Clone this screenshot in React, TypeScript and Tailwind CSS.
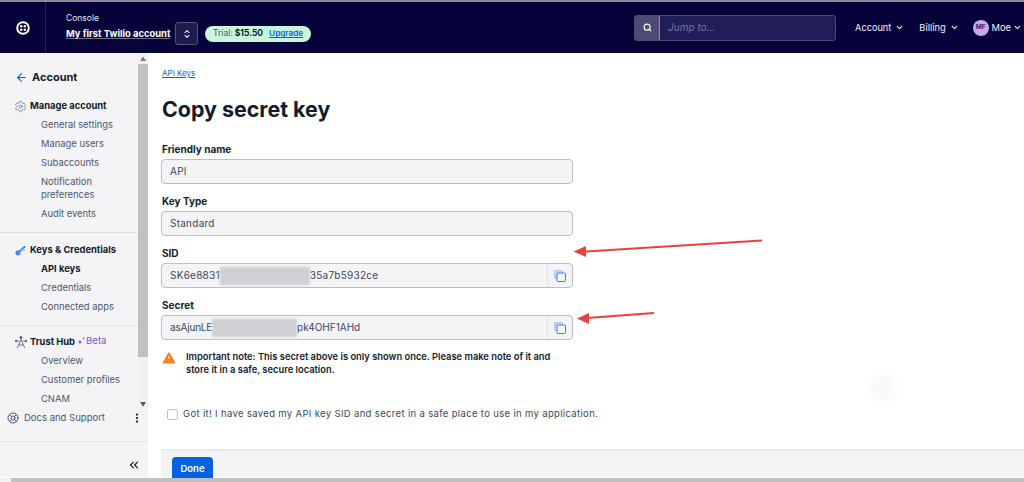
import React from "react";
import { Search, ChevronDown, ChevronsUpDown, ArrowLeft, Settings, LifeBuoy, EllipsisVertical, ChevronsLeft, TriangleAlert } from "lucide-react";

function Sub({ children, bold }: { children: React.ReactNode; bold?: boolean }) {
  return <div className={`pl-[41px] pr-2 py-[3px] text-[9.4px] leading-[13px] ${bold ? "font-bold text-[#121c2d]" : "text-[#4b5671]"}`}>{children}</div>;
}

function GroupTitle({ icon, children }: { icon: React.ReactNode; children: React.ReactNode }) {
  return (
    <div className="flex items-center gap-[3px] pl-[15px] h-[16px] text-[9.4px] font-bold text-[#121c2d] whitespace-nowrap">
      {icon}
      {children}
    </div>
  );
}

function Field({ label, value, tail, blur, tight }: { label: string; value: string; tail?: string; blur?: number; tight?: boolean }) {
  return (
    <div className="w-[412px] mb-[10px]">
      <div className="text-[10px] leading-[15px] font-bold text-[#121c2d] ml-[1px] mb-[4px] h-[13px]">{label}</div>
      <div className="flex items-center h-[25px] rounded-[4px] border border-[#b8bdd1] bg-[#f4f4f6] text-[10px] text-[#394762]">
        <span className={`pl-[8px] whitespace-nowrap ${tight ? "tracking-[-0.2px]" : "tracking-[0.25px]"}`}>{value}</span>
        {blur && <span className="h-[18px] bg-[#cfd0d4] blur-[1px]" style={{ width: blur }} />}
        {tail && <span className={`whitespace-nowrap ${tight ? "tracking-[0px]" : "tracking-[0.25px]"}`}>{tail}</span>}
        {blur && (
          <span className="ml-auto w-[25px] h-full border-l border-[#e1e3ea] flex items-center justify-center">
            <svg width="12" height="12" viewBox="0 0 12 12" fill="none">
              <rect x="0.5" y="0.5" width="8" height="8" rx="1" fill="#c3d5f7" stroke="#a9c4f3" />
              <rect x="3" y="3" width="8.5" height="8.5" rx="1" fill="#f4f4f6" stroke="#3d7fe8" />
            </svg>
          </span>
        )}
      </div>
    </div>
  );
}

export default function App() {
  return (
    <div className="relative w-[1024px] h-[482px] overflow-hidden bg-white font-['Inter',sans-serif]">
      <header className="h-[53px] border-t-2 border-[#8b8a99] bg-[#06033a] flex items-center text-white">
        <div className="w-[46px] h-full flex items-center justify-center border-r border-[#24224f]">
          <svg width="14" height="14" viewBox="0 0 14 14" className="ml-[1px]">
            <circle cx="7" cy="7" r="5.8" fill="none" stroke="#fff" strokeWidth="2" />
            <circle cx="5.2" cy="5.2" r="1.25" fill="#fff" />
            <circle cx="8.8" cy="5.2" r="1.25" fill="#fff" />
            <circle cx="5.2" cy="8.8" r="1.25" fill="#fff" />
            <circle cx="8.8" cy="8.8" r="1.25" fill="#fff" />
          </svg>
        </div>
        <div className="ml-[20px] w-[105px] pb-[4px]">
          <div className="text-[8.5px] leading-[12px] text-[#e6e6ee] mb-[3px]">Console</div>
          <div className="text-[9.4px] leading-[13px] font-bold underline decoration-[#6d6c8e] whitespace-nowrap">My first Twilio account</div>
        </div>
        <div className="ml-[4px] mt-[12px] w-[23px] h-[23px] rounded-[3px] border border-[#55547a] bg-[#1e1b4f] flex items-center justify-center">
          <ChevronsUpDown size={10} strokeWidth={2.5} />
        </div>
        <div className="ml-[7px] mt-[12px] h-[16px] w-[106px] rounded-full bg-[#c9f5de] flex items-center pl-[8px] text-[8.5px] whitespace-nowrap">
          <span className="text-[#4b5671]">Trial:</span>
          <span className="ml-[2px] font-bold text-[#121c2d]">$15.50</span>
          <span className="ml-[6px] text-[8.2px] font-semibold text-[#0263e0] underline">Upgrade</span>
        </div>
        <div className="ml-auto flex items-center h-[26px] w-[202px] rounded-[3px] border border-[#4b4a71] bg-[#211e57] overflow-hidden">
          <div className="w-[25px] h-full bg-[#4d4b73] flex items-center justify-center border-r border-[#8a89a6]">
            <Search size={9} strokeWidth={3} />
          </div>
          <span className="ml-[8px] text-[10px] italic text-[#77769a]">Jump to...</span>
        </div>
        <div className="ml-[19px] flex items-center text-[9.2px] text-[#f0f0f5]">
          Account
          <ChevronDown size={9} strokeWidth={3} className="ml-[4px]" />
        </div>
        <div className="ml-[15px] flex items-center text-[9.3px] text-[#f0f0f5]">
          Billing
          <ChevronDown size={9} strokeWidth={3} className="ml-[4px]" />
        </div>
        <div className="ml-[14px] mr-[2px] flex items-center text-[9.3px] text-[#f0f0f5]">
          <span className="w-[16px] h-[16px] rounded-full bg-[#c8a9ef] text-[6.5px] font-bold text-[#33285f] flex items-center justify-center">MF</span>
          <span className="ml-[3px]">Moe</span>
          <ChevronDown size={9} strokeWidth={3} className="ml-[2px]" />
        </div>
      </header>

      <div className="flex h-[424px]">
        <aside className="relative w-[148px] shrink-0 bg-[#f4f4f6] overflow-hidden">
          <div className="flex items-center pl-[15px] pt-[15px] h-[33px] text-[11px] font-bold text-[#121c2d]">
            <ArrowLeft size={13} className="text-[#0263e0] mr-[4px]" />
            Account
          </div>
          <div className="mt-[12px] w-[138px]">
            <GroupTitle icon={<Settings size={13} strokeWidth={1.1} className="text-[#4b5671] -ml-[1px]" />}>Manage account</GroupTitle>
            <div className="mt-[1px]">
              <Sub>General settings</Sub>
              <Sub>Manage users</Sub>
              <Sub>Subaccounts</Sub>
              <Sub>Notification preferences</Sub>
              <Sub>Audit events</Sub>
            </div>
            <div className="h-px bg-[#e1e3ea] mt-[9px] mb-[9px]" />
            <GroupTitle
              icon={
                <svg width="12" height="12" viewBox="0 0 12 12" fill="#4f8bec">
                  <circle cx="3" cy="8.8" r="2.6" />
                  <path d="M4 6.6 9.6 1.6 11 3 5.4 8zM7.2 5.4 8.8 7 9.8 6 8.2 4.4z" />
                </svg>
              }
            >
              Keys &amp; Credentials
            </GroupTitle>
            <div className="mt-[1px]">
              <Sub bold>API keys</Sub>
              <Sub>Credentials</Sub>
              <Sub>Connected apps</Sub>
            </div>
            <div className="h-px bg-[#e1e3ea] mt-[9px] mb-[8px]" />
            <GroupTitle
              icon={
                <svg width="12" height="13" viewBox="0 0 12 13" fill="none" stroke="#4b5671" strokeWidth="0.8">
                  <path d="M6 3.6 3.6 9h4.8zM0.6 5H4M8 5H11.4M6 0.8V3.6M3.6 9 2.2 12M8.4 9l1.4 3" />
                  <circle cx="6" cy="1.4" r="1" fill="#4b5671" />
                  <circle cx="1" cy="5" r="0.8" fill="#4b5671" />
                  <circle cx="11" cy="5" r="0.8" fill="#4b5671" />
                </svg>
              }
            >
              <span>Trust Hub</span>
              <span className="flex items-center -ml-[2px] -mt-[1px] text-[9.6px] font-normal text-[#8155d6]">
                <svg width="10" height="10" viewBox="0 0 8 10" fill="#8155d6"><path d="M3 3.5 3.7 5.5 5.8 6 3.7 6.7 3 8.8 2.3 6.7 0.2 6 2.3 5.5zM6.5 0.5 7 2 7.9 2.3 7 2.6 6.5 4 6 2.6 5.1 2.3 6 2z" /></svg>
                Beta
              </span>
            </GroupTitle>
            <div className="mt-[1px]">
              <Sub>Overview</Sub>
              <Sub>Customer profiles</Sub>
              <Sub>CNAM</Sub>
            </div>
          </div>

          <div className="absolute left-0 top-[357px] w-[148px] h-[67px] bg-[#f4f4f6]">
            <div className="flex items-center h-[16px] pl-[7px] text-[9.5px] text-[#4b5671]">
              <LifeBuoy size={12} className="mr-[5px]" />
              Docs and Support
              <EllipsisVertical size={12} strokeWidth={2.5} className="ml-auto mr-[5px] text-[#121c2d]" />
            </div>
            <div className="h-px bg-[#e1e3ea] mt-[15px]" />
            <div className="flex justify-end pr-[7px] mt-[16px]">
              <ChevronsLeft size={14} strokeWidth={2} className="text-[#121c2d]" />
            </div>
          </div>

          <div className="absolute right-0 top-0 w-[10px] h-[357px] bg-[#f1f1f1] flex flex-col">
            <div className="h-[11px] text-[6px] leading-[11px] text-center text-[#777]">▲</div>
            <div className="h-[293px] bg-[#c1c1c1]" />
            <div className="mt-auto h-[11px] text-[6px] leading-[11px] text-center text-[#555]">▼</div>
          </div>
        </aside>

        <main className="relative flex-1 min-w-0">
          <div className="pl-[13px]">
            <a className="block mt-[15px] ml-[1px] text-[8px] leading-[10px] text-[#0263e0] underline">API Keys</a>
            <h1 className="mt-[18px] ml-[1px] text-[21.4px] leading-[26px] font-bold text-[#121c2d]">Copy secret key</h1>
            <div className="mt-[20px]">
              <Field label="Friendly name" value="API" />
              <Field label="Key Type" value="Standard" />
              <Field label="SID" value="SK6e8831" tail="35a7b5932ce" blur={90} />
              <Field label="Secret" value="asAjunLE" tail="pk4OHF1AHd" blur={85} tight />
            </div>
            <div className="flex items-start mt-[9px]">
              <TriangleAlert size={16} fill="#f47c22" stroke="#fff" strokeWidth={1.5} className="shrink-0" />
              <p className="ml-[9px] w-[380px] text-[9.35px] leading-[13px] font-semibold text-[#121c2d]">
                Important note: This secret above is only shown once. Please make note of it and store it in a safe, secure location.
              </p>
            </div>
            <label className="flex items-center mt-[31px] ml-[6px] text-[9.5px] text-[#394762] tracking-[0.34px] whitespace-nowrap">
              <span className="w-[11px] h-[11px] rounded-[2px] border border-[#b8bdd1] bg-white mr-[5px]" />
              Got it! I have saved my API key SID and secret in a safe place to use in my application.
            </label>
          </div>
          <div className="absolute left-[13px] right-0 top-[396px] h-[28px] bg-[#f4f4f6] border-t-2 border-[#e8e8ea] pl-[11px] pt-[6px]">
            <button className="block w-[41px] h-[24px] rounded-t-[4px] bg-[#0263e0] text-white text-[9.5px] font-semibold">Done</button>
          </div>
          <div className="absolute left-[722px] top-[322px] w-[25px] h-[25px] rounded-full bg-[#f8f8f8] blur-[5px]" />
        </main>
      </div>

      <div className="absolute left-0 right-0 bottom-0 h-[4px] bg-[#c1c1c1] flex">
        <div className="w-[11px] bg-[#f1f1f1]" />
      </div>

      <svg className="absolute left-[570px] top-[235px]" width="200" height="100" viewBox="0 0 200 100" fill="none">
        <path d="M192 5.5 16 16.5" stroke="#e8413f" strokeWidth="2" />
        <path d="M3.5 16.5 16 11 16 22z" fill="#e8413f" />
        <path d="M84 78 17 83" stroke="#e8413f" strokeWidth="2" />
        <path d="M7 83.5 19 78 19 89z" fill="#e8413f" />
      </svg>
    </div>
  );
}
